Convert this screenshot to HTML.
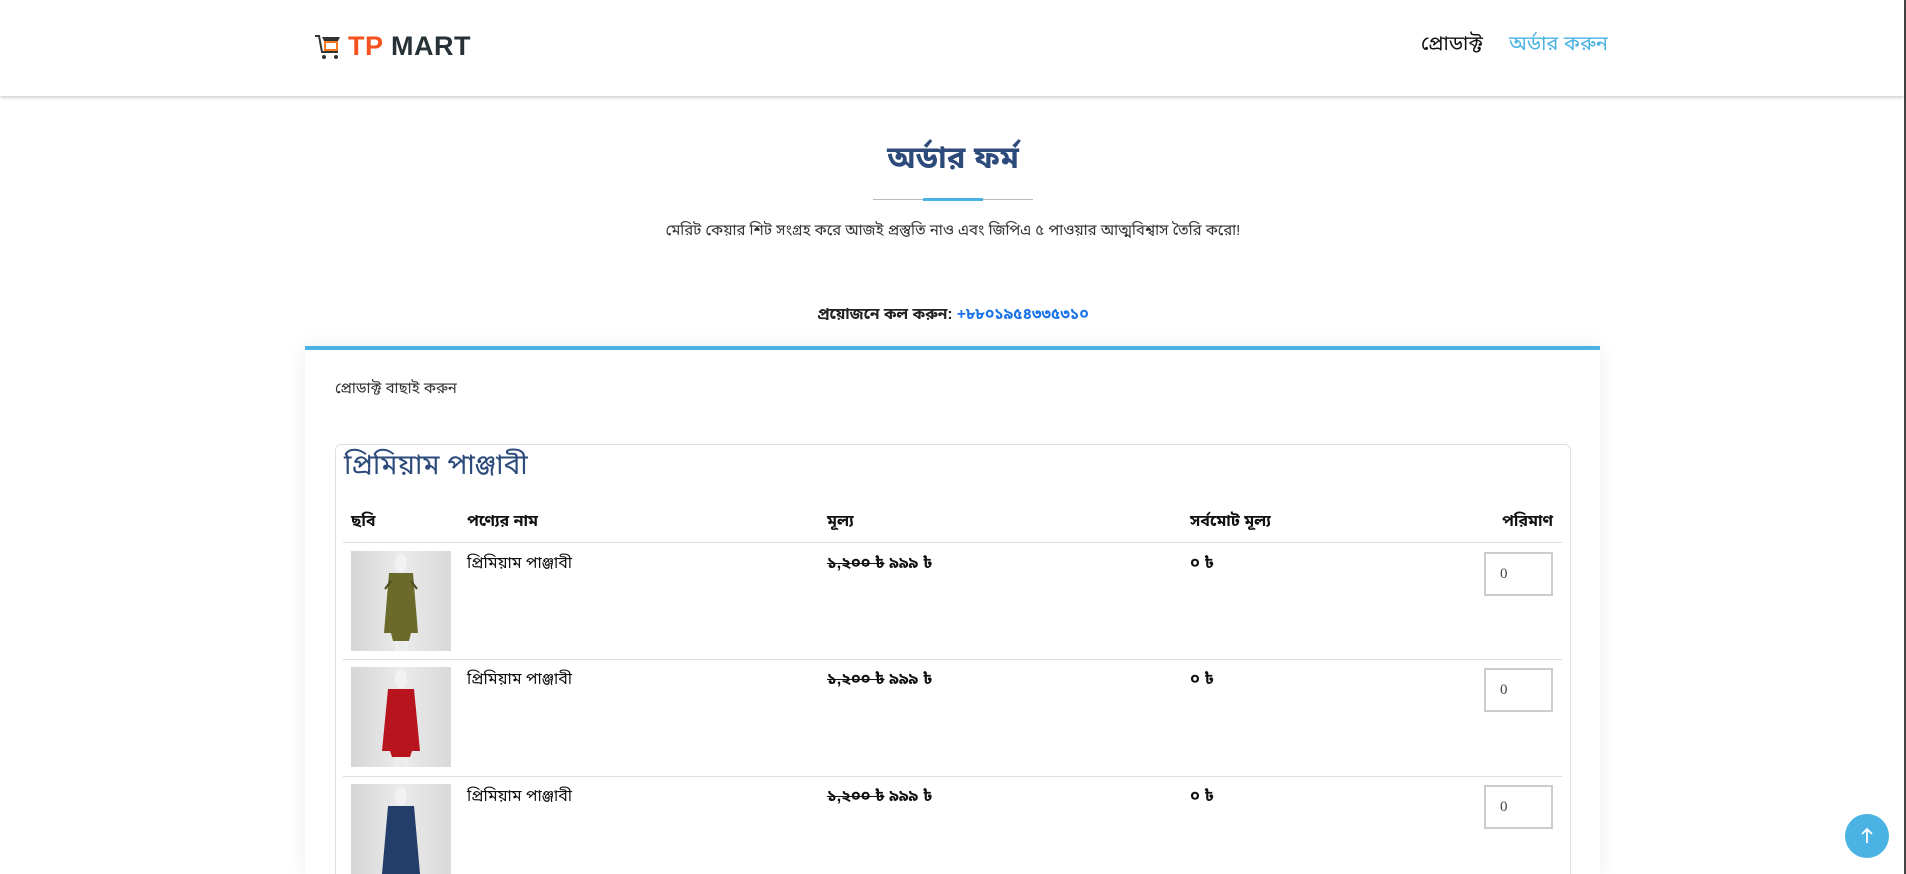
<!DOCTYPE html>
<html style="height:874px;overflow:hidden"><head><meta charset="utf-8">
<style>
*{margin:0;padding:0;box-sizing:border-box}
body{width:1906px;height:874px;overflow:hidden;background:#fff;font-family:"Liberation Sans","Noto Sans Bengali","Lohit Bengali",sans-serif;color:#222;position:relative}
.a{position:absolute;white-space:nowrap}
.hdr{position:absolute;left:0;top:0;width:1904px;height:96px;background:#fff;box-shadow:0 2px 3px rgba(0,0,0,.18);z-index:2}
.card{position:absolute;left:305px;top:346px;width:1295px;height:528px;background:#fff;border-top:4px solid #4ab3e3;box-shadow:0 0 18px rgba(0,0,0,.08)}
.box{position:absolute;left:335px;top:444px;width:1236px;height:440px;border:1px solid #dde0e5;border-radius:6px}
.line{position:absolute;left:343px;width:1219px;height:1px;background:#dcdee2}
.img{position:absolute;left:351px;width:100px;height:100px;background:linear-gradient(90deg,#d6d6d6,#ebebeb 50%,#d9d9d9)}
.inp{position:absolute;left:1484px;width:69px;height:44px;border:2px solid #ccc;font-family:"Liberation Serif",serif;font-size:15px;color:#444;padding:12px 0 0 14px}
.t{font-size:16px;color:#111}
</style></head><body>
<div class="hdr">
 <svg class="a" style="left:314px;top:33px" width="30" height="28" viewBox="0 0 30 28">
  <path d="M1 3h4l3 16h16" stroke="#333" stroke-width="2" fill="none"/>
  <path d="M8 4h18l-2 4H10z" fill="#333"/>
  <rect x="10" y="8" width="14" height="10" fill="#f47b20"/>
  <rect x="12" y="10" width="10" height="6" fill="#fff"/>
  <circle cx="10" cy="24" r="2" fill="#333"/><circle cx="22" cy="24" r="2" fill="#333"/>
 </svg>
 <div class="a" style="left:348px;top:31px;font-size:27px;font-weight:bold;letter-spacing:0.5px"><span style="color:#f4511e">TP</span> <span style="color:#263238">MART</span></div>
 <div class="a" style="left:1421px;top:33px;font-size:20px;color:#111">প্রোডাক্ট</div>
 <div class="a" style="left:1509px;top:33px;font-size:20px;color:#4ab3e3">অর্ডার করুন</div>
</div>
<div class="a" style="left:0;width:1906px;text-align:center;top:140px;font-size:31px;font-weight:bold;color:#2c4a7a">অর্ডার ফর্ম</div>
<div class="a" style="left:873px;top:199px;width:160px;height:1px;background:#bbb"></div>
<div class="a" style="left:923px;top:198px;width:60px;height:3px;background:#4ab3e3"></div>
<div class="a" style="left:0;width:1906px;text-align:center;top:222px;font-size:15px;color:#333">মেরিট কেয়ার শিট সংগ্রহ করে আজই প্রস্তুতি নাও এবং জিপিএ ৫ পাওয়ার আত্মবিশ্বাস তৈরি করো!</div>
<div class="a" style="left:0;width:1906px;text-align:center;top:306px;font-size:15.5px;font-weight:bold;color:#222">প্রয়োজনে কল করুন: <span style="color:#1a73e8">+৮৮০১৯৫৪৩৩৫৩১০</span></div>
<div class="card"></div>
<div class="a" style="left:335px;top:380px;font-size:15px;color:#333">প্রোডাক্ট বাছাই করুন</div>
<div class="box"></div>
<div class="a" style="left:344px;top:449px;font-size:28px;color:#2c4a7a">প্রিমিয়াম পাঞ্জাবী</div>
<div class="a t" style="left:351px;top:511px;font-weight:bold">ছবি</div>
<div class="a t" style="left:467px;top:511px;font-weight:bold">পণ্যের নাম</div>
<div class="a t" style="left:827px;top:511px;font-weight:bold">মূল্য</div>
<div class="a t" style="left:1190px;top:511px;font-weight:bold">সর্বমোট মূল্য</div>
<div class="a t" style="left:1453px;width:100px;text-align:right;top:511px;font-weight:bold">পরিমাণ</div>
<div class="line" style="top:542px"></div>
<div class="line" style="top:659px"></div>
<div class="line" style="top:776px"></div>

<div class="img" style="top:551px"><svg width="100" height="100"><ellipse cx="50" cy="12" rx="6" ry="9" fill="#f2f2f2"/><path d="M38 22h24l5 60h-7l-2 8H42l-2-8h-7z" fill="#6b6a2a"/><path d="M40 30l-6 8M60 30l6 8" stroke="#4a4a20" stroke-width="2"/><rect x="44" y="90" width="4" height="10" fill="#eee"/><rect x="53" y="90" width="4" height="10" fill="#eee"/></svg></div>
<div class="img" style="top:667px"><svg width="100" height="100"><ellipse cx="50" cy="12" rx="6" ry="9" fill="#f2f2f2"/><path d="M37 22h26l6 62h-8l-2 6H41l-2-6h-8z" fill="#b8141e"/><rect x="44" y="90" width="4" height="10" fill="#eee"/><rect x="53" y="90" width="4" height="10" fill="#eee"/></svg></div>
<div class="img" style="top:784px;height:90px"><svg width="100" height="90"><ellipse cx="50" cy="12" rx="6" ry="9" fill="#f2f2f2"/><path d="M37 22h26l6 68H31z" fill="#233e6b"/></svg></div>

<div class="a t" style="left:467px;top:553px">প্রিমিয়াম পাঞ্জাবী</div>
<div class="a t" style="left:467px;top:669px">প্রিমিয়াম পাঞ্জাবী</div>
<div class="a t" style="left:467px;top:786px">প্রিমিয়াম পাঞ্জাবী</div>
<div class="a t" style="left:827px;top:553px;font-weight:bold"><s>১,২০০ ৳</s> ৯৯৯ ৳</div>
<div class="a t" style="left:827px;top:669px;font-weight:bold"><s>১,২০০ ৳</s> ৯৯৯ ৳</div>
<div class="a t" style="left:827px;top:786px;font-weight:bold"><s>১,২০০ ৳</s> ৯৯৯ ৳</div>
<div class="a t" style="left:1190px;top:553px;font-weight:bold">০ ৳</div>
<div class="a t" style="left:1190px;top:669px;font-weight:bold">০ ৳</div>
<div class="a t" style="left:1190px;top:786px;font-weight:bold">০ ৳</div>
<div class="inp" style="top:552px">0</div>
<div class="inp" style="top:668px">0</div>
<div class="inp" style="top:785px">0</div>

<div class="a" style="left:1845px;top:814px;width:44px;height:44px;border-radius:50%;background:#4ab3e3">
 <svg width="44" height="44"><path d="M22 29V15M17 20l5-5 5 5" stroke="#fff" stroke-width="1.8" fill="none"/></svg>
</div>
<div class="a" style="left:1904px;top:0;width:2px;height:874px;background:#444"></div>
</body></html>
